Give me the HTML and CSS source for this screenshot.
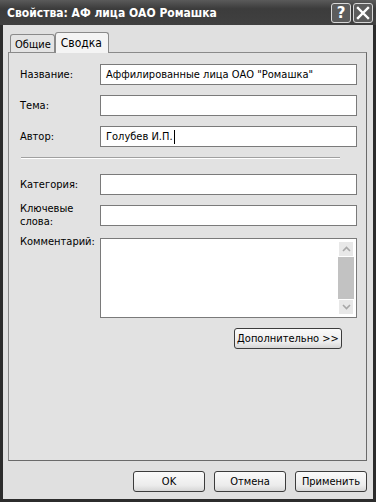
FILE: index.html
```html
<!DOCTYPE html>
<html lang="ru">
<head>
    <meta charset="UTF-8">
    <title>Свойства: АФ лица ОАО Ромашка</title>
    <link rel="stylesheet" href="styles.css">
</head>
<body>

<div class="window">
    <div class="titlebar">
        <span class="title">Свойства: АФ лица ОАО Ромашка</span>
        <div class="caption-btns">
            <span class="cap-btn">?</span>
            <span class="cap-btn">
                <svg width="14" height="14" viewBox="0 0 14 14"><path d="M2 2 L12 12 M12 2 L2 12" stroke="#fff" stroke-width="2.4" stroke-linecap="square"/></svg>
            </span>
        </div>
    </div>

    <div class="content">
        <div class="tabs">
            <span class="tab">Общие</span>
            <span class="tab active">Сводка</span>
        </div>

        <div class="panel">
            <div class="row">
                <label>Название:</label>
                <div class="field">Аффилированные лица ОАО "Ромашка"</div>
            </div>
            <div class="row">
                <label>Тема:</label>
                <div class="field"></div>
            </div>
            <div class="row">
                <label>Автор:</label>
                <div class="field">Голубев И.П.<span class="caret"></span></div>
            </div>

            <div class="separator"></div>

            <div class="row">
                <label>Категория:</label>
                <div class="field"></div>
            </div>
            <div class="row top">
                <label>Ключевые<br>слова:</label>
                <div class="field"></div>
            </div>
            <div class="row top">
                <label class="comment-label">Комментарий:</label>
                <div class="field memo">
                    <div class="scrollbar">
                        <span class="arrow">
                            <svg width="9" height="6" viewBox="0 0 9 6"><path d="M1 5 L4.5 1.5 L8 5" fill="none" stroke="#a8a8a8" stroke-width="1.6"/></svg>
                        </span>
                        <span class="thumb"></span>
                        <span class="arrow">
                            <svg width="9" height="6" viewBox="0 0 9 6"><path d="M1 1 L4.5 4.5 L8 1" fill="none" stroke="#a8a8a8" stroke-width="1.6"/></svg>
                        </span>
                    </div>
                </div>
            </div>

            <div class="more">
                <button class="btn more-btn">Дополнительно &gt;&gt;</button>
            </div>
        </div>

        <div class="footer">
            <button class="btn">OK</button>
            <button class="btn">Отмена</button>
            <button class="btn">Применить</button>
        </div>
    </div>
</div>

</body>
</html>
```

FILE: styles.css
```css
body {
    margin: 0;
    font-family: "DejaVu Sans Condensed", "DejaVu Sans", sans-serif;
    font-stretch: condensed;
    font-size: 11px;
    color: #000;
    background: #e0e0e0;
}
.window {
    width: 376px;
    height: 502px;
    box-sizing: border-box;
    border: 3px solid #2c2c2c;
    border-top: none;
    background: #e0e0e0;
    display: flex;
    flex-direction: column;
}
.titlebar {
    height: 25px;
    margin: 0 -3px;
    background: linear-gradient(#5a5a5a, #3c3c3c 35%, #404040);
    display: flex;
    align-items: center;
    justify-content: space-between;
    padding: 0 3px 0 7px;
}
.title {
    color: #fff;
    font-weight: bold;
    font-size: 12px;
}
.caption-btns {
    display: flex;
    gap: 2px;
}
.cap-btn {
    width: 18px;
    height: 18px;
    border: 1px solid #d8d8d8;
    border-radius: 3px;
    background: #5c5c5c;
    color: #fff;
    font-family: "DejaVu Sans", sans-serif;
    font-stretch: normal;
    font-weight: bold;
    font-size: 15px;
    display: flex;
    align-items: center;
    justify-content: center;
}
.content {
    flex: 1;
    padding: 7px 6px 0 5px;
    display: flex;
    flex-direction: column;
}
.tabs {
    display: flex;
    align-items: flex-end;
    height: 20px;
    padding-left: 2px;
}
.tab {
    height: 18px;
    box-sizing: border-box;
    padding: 3px 3px 0 4px;
    border: 1px solid #8a8a8a;
    border-bottom: none;
    border-radius: 3px 3px 0 0;
    background: #e4e4e4;
    white-space: nowrap;
}
.tab.active {
    height: 21px;
    margin-bottom: -1px;
    padding: 3px 6px 0 5px;
    background: #f4f4f4;
    font-size: 12px;
    position: relative;
}
.panel {
    height: 409px;
    box-sizing: border-box;
    border: 1px solid #8a8a8a;
    border-right-color: #6a6a6a;
    border-bottom-color: #6a6a6a;
    background: #e2e2e2;
    padding: 11px 9px 0 11px;
}
.row {
    display: flex;
    align-items: center;
    margin-bottom: 10px;
}
.row.top {
    align-items: flex-start;
}
.row label {
    width: 80px;
    line-height: 13px;
    white-space: nowrap;
}
.row.top label {
    margin-top: -3px;
}
.row .comment-label {
    margin-top: 4px;
}
.field {
    width: 257px;
    height: 21px;
    box-sizing: border-box;
    border: 1px solid #7a7a7a;
    background: #fff;
    padding: 0 5px;
    line-height: 19px;
    white-space: nowrap;
    display: flex;
    align-items: center;
}
.caret {
    display: inline-block;
    width: 1px;
    height: 14px;
    background: #000;
    margin-left: 1px;
}
.separator {
    width: 319px;
    height: 0;
    margin: 0 0 15px 1px;
    border-top: 1px solid #a0a0a0;
    border-bottom: 1px solid #fff;
}
.field.memo {
    height: 80px;
    padding: 2px 2px 2px 0;
    justify-content: flex-end;
    align-items: stretch;
}
.scrollbar {
    width: 16px;
    display: flex;
    flex-direction: column;
}
.arrow {
    height: 16px;
    box-sizing: border-box;
    border: 1px solid #fff;
    background: #e8e8e8;
    display: flex;
    align-items: center;
    justify-content: center;
}
.thumb {
    flex: 1;
    background: #c2c2c2;
}
.more {
    display: flex;
    justify-content: flex-end;
    padding-right: 15px;
    margin-top: 2px;
}
.btn {
    font-family: "DejaVu Sans Condensed", "DejaVu Sans", sans-serif;
    font-stretch: condensed;
    font-size: 11px;
    color: #000;
    height: 21px;
    border: 1px solid #3c3c3c;
    border-radius: 3px;
    background: linear-gradient(#fafafa, #ececec 70%, #d6d6d6);
    padding: 0;
    white-space: nowrap;
}
.more-btn {
    width: 108px;
}
.footer {
    display: flex;
    justify-content: flex-end;
    gap: 9px;
    padding-top: 10px;
}
.footer .btn {
    width: 72px;
}
```
